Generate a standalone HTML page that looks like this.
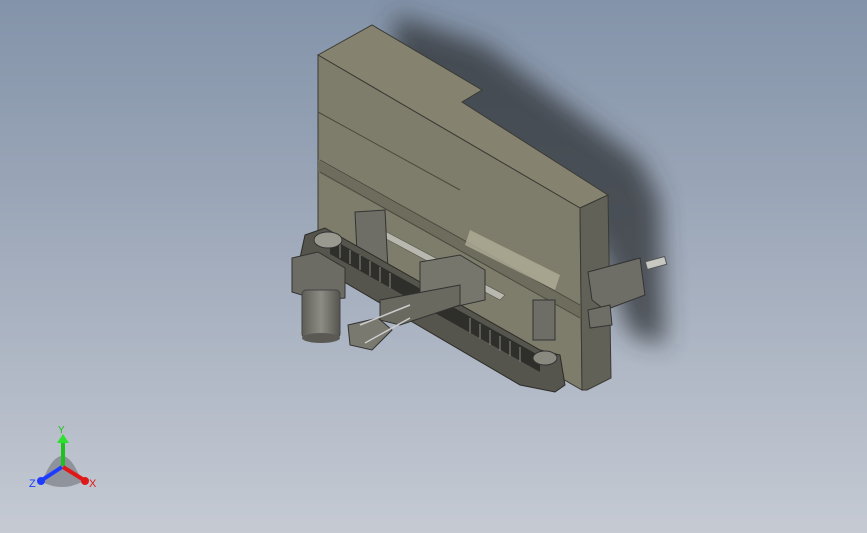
<!DOCTYPE html>
<html><head><style>
html,body{margin:0;padding:0;width:867px;height:533px;overflow:hidden}
body{background:linear-gradient(180deg,#8393a9 0%,#a3adbd 50%,#c5cad3 100%)}
</style></head><body>
<svg width="867" height="533" viewBox="0 0 867 533" xmlns="http://www.w3.org/2000/svg">
<defs>
<filter id="bl" x="-30%" y="-30%" width="160%" height="160%"><feGaussianBlur stdDeviation="12"/></filter>
<linearGradient id="mot" x1="0" x2="1"><stop offset="0" stop-color="#5e5d57"/><stop offset=".5" stop-color="#8d8c84"/><stop offset="1" stop-color="#55544e"/></linearGradient>
</defs>
<polygon points="395,15 485,45 640,160 660,200 665,345 630,335 600,250 420,110 392,90" fill="#2e3036" opacity=".75" filter="url(#bl)"/>
<polygon points="318,55 372,25 482,90 462,102 608,195 580,208" fill="#85836f" stroke="#3a3a34" stroke-width="1"/>
<polygon points="318,55 580,208 582,390 318,240" fill="#7e7c6a" stroke="#3a3a34" stroke-width="1"/>
<polygon points="318,160 580,305 580,318 318,172" fill="#6e6c5c"/>
<line x1="318" y1="112" x2="460" y2="190" stroke="#4a4a40"/>
<line x1="320" y1="160" x2="580" y2="305" stroke="#4a4a40"/>
<line x1="320" y1="172" x2="580" y2="318" stroke="#4a4a40"/>
<polygon points="580,208 608,195 611,378 587,390 582,390" fill="#626158" stroke="#3a3a34"/>
<polygon points="362,226 368,222 505,295 500,300" fill="#b8b8ae" stroke="#55554c" stroke-width=".6"/>
<polygon points="470,230 560,275 555,290 465,245" fill="#b0ae98" opacity=".8"/>
<polygon points="355,212 385,210 388,270 358,272" fill="#6f6e66" stroke="#333"/>
<polygon points="305,235 325,228 540,350 560,355 565,385 555,392 520,385 310,262 300,258" fill="#55544d" stroke="#2c2c28"/>
<polygon points="330,238 540,356 540,372 330,254" fill="#2e2e2a"/>
<g stroke="#8a8a80" stroke-width="1">
<line x1="340" y1="244" x2="340" y2="258"/><line x1="350" y1="250" x2="350" y2="264"/><line x1="360" y1="255" x2="360" y2="270"/><line x1="370" y1="261" x2="370" y2="276"/><line x1="380" y1="267" x2="380" y2="282"/><line x1="390" y1="273" x2="390" y2="288"/><line x1="470" y1="318" x2="470" y2="333"/><line x1="480" y1="324" x2="480" y2="339"/><line x1="490" y1="330" x2="490" y2="345"/><line x1="500" y1="336" x2="500" y2="351"/><line x1="510" y1="341" x2="510" y2="356"/><line x1="520" y1="347" x2="520" y2="362"/>
</g>
<ellipse cx="328" cy="240" rx="14" ry="8" fill="#9a998f" stroke="#333"/>
<ellipse cx="545" cy="358" rx="12" ry="7" fill="#8a8980" stroke="#333"/>
<polygon points="292,258 318,252 345,268 345,298 318,300 292,292" fill="#6c6b64" stroke="#333"/>
<rect x="302" y="290" width="38" height="48" rx="4" fill="url(#mot)" stroke="#444"/>
<ellipse cx="321" cy="338" rx="19" ry="5" fill="#5a5954"/>
<polygon points="420,262 460,255 485,270 485,300 440,310 420,300" fill="#77766c" stroke="#333"/>
<polygon points="380,300 460,285 460,305 400,325 380,320" fill="#6a695f" stroke="#333"/>
<polygon points="348,325 378,318 392,330 372,350 350,345" fill="#7a796f" stroke="#333"/>
<line x1="360" y1="325" x2="410" y2="305" stroke="#ccc" stroke-width="1.5"/>
<line x1="365" y1="343" x2="410" y2="318" stroke="#ccc" stroke-width="1.5"/>
<polygon points="533,300 555,300 555,340 533,340" fill="#6f6e66" stroke="#333"/>
<polygon points="588,272 640,258 645,295 605,310 592,300" fill="#6e6d66" stroke="#333"/>
<polygon points="588,310 610,305 612,325 590,328" fill="#6e6d66" stroke="#333"/>
<rect x="646" y="259" width="20" height="8" fill="#c8c8c2" stroke="#555" transform="rotate(-15 656 263)"/>
<path d="M42,482 Q62,430 82,482 Q62,492 42,482Z" fill="#6f7379" opacity=".6"/>
<rect x="61" y="440" width="4" height="26" fill="#20c020"/>
<polygon points="57,443 63,434 69,443" fill="#30e030"/>
<line x1="62" y1="467" x2="42" y2="480" stroke="#1e3cff" stroke-width="4"/>
<line x1="63" y1="467" x2="84" y2="480" stroke="#e01818" stroke-width="4"/>
<circle cx="41" cy="481" r="4" fill="#1e3cff"/><circle cx="85" cy="481" r="4" fill="#e01818"/>
<text x="58" y="433" font-family="Liberation Sans,sans-serif" font-size="10" fill="#1ac01a">Y</text>
<text x="29" y="487" font-family="Liberation Sans,sans-serif" font-size="11" fill="#1e3cff">Z</text>
<text x="89" y="487" font-family="Liberation Sans,sans-serif" font-size="11" fill="#e01818">X</text>
</svg>
</body></html>
